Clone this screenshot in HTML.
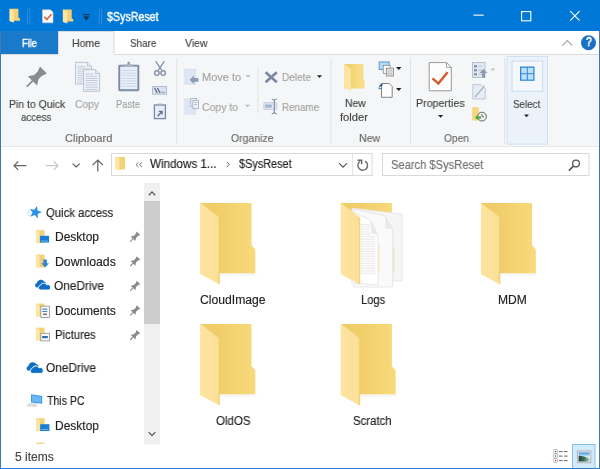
<!DOCTYPE html>
<html><head><meta charset="utf-8"><style>
html,body{margin:0;padding:0;}
body{width:600px;height:469px;overflow:hidden;position:relative;background:#fff;font-family:"Liberation Sans",sans-serif;}
svg{position:absolute;left:0;top:0;}
.t{position:absolute;white-space:nowrap;transform-origin:0 0;font-family:"Liberation Sans",sans-serif;-webkit-text-stroke:0.15px currentColor;will-change:transform;}
.q{position:absolute;color:#fff;font-weight:bold;font-family:"Liberation Sans",sans-serif;}
</style></head><body>
<svg width="600" height="469" viewBox="0 0 600 469">
<defs>
<linearGradient id="gback" x1="0" y1="0" x2="1" y2="0"><stop offset="0.3" stop-color="#f0cd68"/><stop offset="1" stop-color="#f8da7d"/></linearGradient>
<linearGradient id="gflap" x1="0" y1="0" x2="1" y2="0"><stop offset="0" stop-color="#fde4a0"/><stop offset="0.85" stop-color="#fbe099"/><stop offset="1" stop-color="#f9da8c"/></linearGradient>
<linearGradient id="gpic" x1="0" y1="0" x2="0" y2="1"><stop offset="0" stop-color="#3f8ee0"/><stop offset="0.25" stop-color="#8cc4f0"/><stop offset="0.5" stop-color="#e3f3f8"/><stop offset="1" stop-color="#b8d8d0"/></linearGradient>
<linearGradient id="ghill" x1="0" y1="0" x2="1" y2="0"><stop offset="0" stop-color="#1d4536"/><stop offset="0.5" stop-color="#3d6d5c"/><stop offset="1" stop-color="#b5d5cc"/></linearGradient>
<linearGradient id="gback2" x1="0" y1="0" x2="1" y2="0"><stop offset="0.3" stop-color="#f3d371"/><stop offset="1" stop-color="#f9df90"/></linearGradient>
</defs>
<rect x="0" y="0" width="600" height="31" fill="#0078d7"/>
<polygon points="9.6,8.8 18.4,8.8 18.4,17.4 20.0,18.5 20.0,20.7 9.6,20.7" fill="#f3d173"/><polygon points="9.6,8.8 14.0,10.5 14.0,22.6 9.6,21.2" fill="#fde6a4"/>
<rect x="27.5" y="9" width="2.5" height="15" rx="1" fill="none" stroke="#3d92e0" stroke-width="0.8"/>
<path d="M42.5 9.8 H50.5 L53 12.3 V22.8 H42.5 Z" fill="#fafafa" stroke="#c9c9c9" stroke-width="0.6"/>
<polyline points="44.3,16.8 46.8,19.5 51.5,14.3" fill="none" stroke="#d9582b" stroke-width="1.5"/>
<polygon points="62.9,9.6 71.7,9.6 71.7,18.2 73.3,19.3 73.3,21.5 62.9,21.5" fill="#f3d173"/><polygon points="62.9,9.6 67.3,11.3 67.3,23.4 62.9,22.0" fill="#fde6a4"/>
<rect x="83.3" y="14" width="6" height="1.2" fill="#1b2b48"/>
<polygon points="83.3,16.6 89.3,16.6 86.3,20.4" fill="#1b2b48"/>
<rect x="99.2" y="9" width="2.5" height="15" rx="1" fill="none" stroke="#3d92e0" stroke-width="0.8"/>
<rect x="473.5" y="14.6" width="10.3" height="1.1" fill="#fff"/>
<rect x="521.6" y="11.6" width="9.2" height="9.2" fill="none" stroke="#fff" stroke-width="1.1"/>
<path d="M570.2 11.2 L579.6 20.6 M579.6 11.2 L570.2 20.6" stroke="#fff" stroke-width="1.1"/>
<rect x="0" y="31" width="600" height="23" fill="#ffffff"/>
<rect x="0" y="31" width="58" height="23" fill="#1979ca"/>
<rect x="58.5" y="31.5" width="55.5" height="23" fill="#f5f6f7" stroke="#dadbdc" stroke-width="1"/>
<polyline points="562.3,45.6 567.3,40.6 572.3,45.6" fill="none" stroke="#a2a2a2" stroke-width="1.1"/>
<circle cx="588.5" cy="42.7" r="7.5" fill="#1a6fc6"/>
<rect x="0" y="54" width="600" height="93" fill="#f5f6f7"/>
<rect x="0" y="54" width="58" height="1" fill="#dadbdc"/>
<rect x="114" y="54" width="486" height="1" fill="#dadbdc"/>
<rect x="0" y="146" width="600" height="1" fill="#e6e7e8"/>
<rect x="176.2" y="58" width="1" height="86" fill="#e2e3e4"/>
<rect x="330.5" y="58" width="1" height="86" fill="#e2e3e4"/>
<rect x="409.9" y="58" width="1" height="86" fill="#e2e3e4"/>
<rect x="504.2" y="58" width="1" height="86" fill="#e2e3e4"/>
<g transform="translate(26.8,86.6) rotate(45)" fill="#8a8b8c"><rect x="-0.9" y="-8.5" width="1.8" height="8.5"/><polygon points="-6.6,-8 6.6,-8 3,-13.5 3,-18.5 4.9,-23.5 -4.9,-23.5 -3,-18.5 -3,-13.5"/></g>
<path d="M75.5 62.3 H87.5 L91.5 66.3 V84.1 H75.5 Z" fill="#eef2f8" stroke="#b3bfd2" stroke-width="0.9"/><path d="M87.5 62.3 V66.3 H91.5" fill="#dfe6f0" stroke="#b3bfd2" stroke-width="0.7"/><rect x="77.5" y="66.3" width="8" height="0.8" fill="#b9c4d6"/><rect x="77.5" y="68.5" width="12" height="0.8" fill="#b9c4d6"/><rect x="77.5" y="70.7" width="12" height="0.8" fill="#b9c4d6"/><rect x="77.5" y="72.9" width="12" height="0.8" fill="#b9c4d6"/><rect x="77.5" y="75.1" width="12" height="0.8" fill="#b9c4d6"/><rect x="77.5" y="77.3" width="12" height="0.8" fill="#b9c4d6"/><rect x="77.5" y="79.5" width="12" height="0.8" fill="#b9c4d6"/><rect x="77.5" y="81.7" width="12" height="0.8" fill="#b9c4d6"/>
<path d="M83.6 69.6 H95.6 L99.6 73.6 V91.39999999999999 H83.6 Z" fill="#eef2f8" stroke="#b3bfd2" stroke-width="0.9"/><path d="M95.6 69.6 V73.6 H99.6" fill="#dfe6f0" stroke="#b3bfd2" stroke-width="0.7"/><rect x="85.6" y="73.6" width="8" height="0.8" fill="#b9c4d6"/><rect x="85.6" y="75.8" width="12" height="0.8" fill="#b9c4d6"/><rect x="85.6" y="78.0" width="12" height="0.8" fill="#b9c4d6"/><rect x="85.6" y="80.2" width="12" height="0.8" fill="#b9c4d6"/><rect x="85.6" y="82.4" width="12" height="0.8" fill="#b9c4d6"/><rect x="85.6" y="84.6" width="12" height="0.8" fill="#b9c4d6"/><rect x="85.6" y="86.8" width="12" height="0.8" fill="#b9c4d6"/><rect x="85.6" y="89.0" width="12" height="0.8" fill="#b9c4d6"/>
<rect x="118.3" y="64.8" width="21" height="26.4" rx="1.4" fill="#7f8ca8"/>
<rect x="120.2" y="66.6" width="17.2" height="22.6" fill="#e9eff8"/>
<rect x="121.2" y="70.2" width="15.2" height="0.7" fill="#c3cee0"/>
<rect x="121.2" y="72.8" width="15.2" height="0.7" fill="#c3cee0"/>
<rect x="121.2" y="75.4" width="15.2" height="0.7" fill="#c3cee0"/>
<rect x="121.2" y="78" width="15.2" height="0.7" fill="#c3cee0"/>
<rect x="121.2" y="80.6" width="15.2" height="0.7" fill="#c3cee0"/>
<rect x="121.2" y="83.2" width="15.2" height="0.7" fill="#c3cee0"/>
<rect x="121.2" y="85.8" width="15.2" height="0.7" fill="#c3cee0"/>
<polygon points="123.6,66.8 125,64.2 132.6,64.2 134,66.8" fill="#aab4c6"/>
<circle cx="128.8" cy="63" r="1.5" fill="#9aa5b8"/>
<g fill="none" stroke="#8490a8" stroke-width="1.35"><path d="M155.6 61.4 L161.8 70.2 M164.4 61.4 L158.2 70.2"/><circle cx="156.9" cy="73.1" r="2.3"/><circle cx="163.1" cy="73.1" r="2.3"/></g>
<rect x="152.6" y="86.6" width="14" height="7.6" fill="#dae3f1" stroke="#a3b0c7" stroke-width="0.8"/>
<path d="M154.6 88 L157.2 93 M157.4 88 L160 93" fill="none" stroke="#4f5e7c" stroke-width="1.1"/>
<rect x="160.5" y="91.8" width="4.6" height="0.9" fill="#8f9bb3"/>
<rect x="154.4" y="105" width="11" height="13.6" fill="#e9eef6" stroke="#7d89a2" stroke-width="1.3"/>
<rect x="157.6" y="103.6" width="4.6" height="2.4" fill="#a5b0c2"/>
<path d="M157.6 116.2 L161.6 111.8 M158.8 111.4 H162 V114.6" fill="none" stroke="#5f7296" stroke-width="1.4"/>
<rect x="184.8" y="69" width="11.2" height="15.2" fill="#dde6f2" stroke="#d3dcea" stroke-width="0.5"/>
<polygon points="189.6,79.8 194,75.6 194,77.9 198.4,77.9 198.4,81.7 194,81.7 194,84" fill="#8e9cb4"/>
<rect x="184.8" y="98.8" width="11.2" height="15.4" fill="#dde6f2" stroke="#d3dcea" stroke-width="0.5"/>
<rect x="190.8" y="98.4" width="5.8" height="7.8" fill="#eef2f8" stroke="#a3afc4" stroke-width="0.8"/>
<rect x="192.8" y="100.4" width="5.8" height="8" fill="#eef2f8" stroke="#a3afc4" stroke-width="0.8"/>
<rect x="194.2" y="102.3" width="3" height="0.7" fill="#a3afc4"/><rect x="194.2" y="104.2" width="3" height="0.7" fill="#a3afc4"/>
<polygon points="245.5,75 250.5,75 248,77.6" fill="#bdbdbd"/>
<polygon points="245,104.8 250,104.8 247.5,107.4" fill="#bdbdbd"/>
<rect x="257.5" y="67.5" width="1" height="45" fill="#e2e3e4"/>
<path d="M265.6 72.2 L276.8 82.2 M276.8 72.2 L265.6 82.2" stroke="#7a88a3" stroke-width="2.7"/>
<polygon points="317,75.3 322,75.3 319.5,78" fill="#222"/>
<rect x="263.8" y="102.6" width="13" height="7" rx="1" fill="#dde5f1" stroke="#b7c3d6" stroke-width="0.7"/>
<rect x="265.2" y="104.6" width="6.5" height="3" fill="#a6b4cb"/>
<path d="M271.8 99 Q274.3 99.6 274.3 101 Q274.3 99.6 276.8 99 M274.3 100.5 V112.5 M271.8 114 Q274.3 113.4 274.3 112 Q274.3 113.4 276.8 114" stroke="#7d89a2" stroke-width="1.1" fill="none"/>
<polygon points="344,64 363.4,64 363.4,78.5 364.6,80 364.6,88.6 344,88.6" fill="url(#gback2)"/>
<polygon points="344,64 351,69.4 351,91.3 344,86.8" fill="#fde4a2"/>
<rect x="379.2" y="61.9" width="10" height="7.6" fill="#b7d9f5" stroke="#4f95d6" stroke-width="0.9"/>
<rect x="383.2" y="65.3" width="7" height="8.2" fill="#fafafa" stroke="#8a8a8a" stroke-width="0.8"/>
<rect x="386.4" y="68.2" width="7.2" height="7.8" fill="#e6e6e6" stroke="#8a8a8a" stroke-width="0.8"/>
<path d="M386.4 70.8 H393.6 M386.4 73.4 H393.6 M389 68.2 V76 M391.2 68.2 V76" stroke="#b5b5b5" stroke-width="0.5"/>
<polygon points="396,67 401.5,67 398.75,70" fill="#222"/>
<path d="M381.5 83.5 H389.2 L392.2 86.5 V97.3 H381.5 Z" fill="#fff" stroke="#777" stroke-width="0.9"/>
<path d="M379 87.6 L380.6 84.6 H383 M378.6 88.6 H381.5" stroke="#3b82cc" stroke-width="1"/>
<polygon points="396,88 401.5,88 398.75,91" fill="#222"/>
<path d="M429.2 62.6 H446.5 L451.3 67.4 V90.8 H429.2 Z" fill="#fdfdfd" stroke="#8e8e8e" stroke-width="0.9"/>
<path d="M446.5 62.6 V67.4 H451.3" fill="none" stroke="#8e8e8e" stroke-width="0.8"/>
<polyline points="432.5,78.3 438.4,83.6 447.6,72.2" fill="none" stroke="#d55a2a" stroke-width="2.4"/>
<polygon points="438,115 443.2,115 440.6,117.8" fill="#222"/>
<rect x="472.5" y="62.5" width="12.5" height="15" fill="#e3e9f2" stroke="#aab6ca" stroke-width="0.8"/>
<rect x="474" y="65" width="3" height="2.5" fill="#8d9ab0"/><rect x="478" y="65.8" width="4" height="0.8" fill="#b0bbcc"/>
<rect x="474" y="69" width="3" height="2.5" fill="#8d9ab0"/><rect x="478" y="69.8" width="4" height="0.8" fill="#b0bbcc"/>
<rect x="474" y="73" width="3" height="2.5" fill="#8d9ab0"/><rect x="478" y="73.8" width="4" height="0.8" fill="#b0bbcc"/>
<path d="M482 77.5 V73 H479.5 L483.5 69 L487.5 73 H485 V77.5 Z" fill="#8d9ab0"/>
<polygon points="490.6,68.5 495.2,68.5 492.9,71" fill="#bdbdbd"/>
<path d="M472.8 84.6 H481 L485.2 88.8 V99 H472.8 Z" fill="#e8edf5" stroke="#b3bfd1" stroke-width="0.8"/>
<path d="M475 97 L484.5 86" stroke="#a9b5c8" stroke-width="1.2"/>
<polygon points="472.5,107.5 478.5,107.5 478.5,115 472.5,120" fill="#efc55c"/>
<rect x="472.5" y="107.5" width="6" height="13" fill="#f5d57e"/>
<circle cx="482" cy="116.6" r="4.4" fill="#f0f0f0" stroke="#666" stroke-width="1"/>
<path d="M482 114 V116.8 H484" stroke="#555" stroke-width="0.8" fill="none"/>
<path d="M475 117.5 L478 115 V116.6 H481 V118.5 H478 V120 Z" fill="#3aa83a"/>
<rect x="507" y="56.5" width="40.5" height="87.6" fill="#ecf2f9" stroke="#d2e1f1" stroke-width="1"/>
<rect x="512" y="61" width="30.6" height="30.3" fill="#f4f7fb" stroke="#c9dbec" stroke-width="1"/>
<rect x="520" y="66.5" width="14.5" height="14.3" fill="#2d89d9"/>
<rect x="521.3" y="67.8" width="5.5" height="5.4" fill="#bfe0fa"/><rect x="527.8" y="67.8" width="5.5" height="5.4" fill="#bfe0fa"/>
<rect x="521.3" y="74.2" width="5.5" height="5.4" fill="#bfe0fa"/><rect x="527.8" y="74.2" width="5.5" height="5.4" fill="#bfe0fa"/>
<polygon points="524,114.6 529,114.6 526.5,117.2" fill="#222"/>
<path d="M14 165.7 H26.4 M18.2 161.5 L14 165.7 L18.2 169.9" fill="none" stroke="#666" stroke-width="1.2"/>
<path d="M45.6 165.7 H58 M53.8 161.5 L58 165.7 L53.8 169.9" fill="none" stroke="#c8c8c8" stroke-width="1.2"/>
<polyline points="72.6,163.6 76.2,167 79.8,163.6" fill="none" stroke="#5a5a5a" stroke-width="1.2"/>
<path d="M97.8 171.6 V160 M92.6 165.2 L97.8 160 L103 165.2" fill="none" stroke="#606060" stroke-width="1.2"/>
<rect x="111.5" y="153.5" width="260.5" height="22" fill="#fff" stroke="#d9d9d9" stroke-width="1"/>
<rect x="352" y="154" width="1" height="21" fill="#e3e3e3"/>
<rect x="115.5" y="157" width="9.5" height="12.5" fill="#f4d375"/>
<polygon points="115.5,157 119.5,158.6 119.5,170.5 115.5,169" fill="#fde6a6"/>
<path d="M138.5 162.3 L136 164.7 L138.5 167.1 M142 162.3 L139.5 164.7 L142 167.1" fill="none" stroke="#666" stroke-width="0.9"/>
<polyline points="226.8,161.8 229.4,164.4 226.8,167" fill="none" stroke="#666" stroke-width="1"/>
<polyline points="339,163.2 343,167.2 347,163.2" fill="none" stroke="#555" stroke-width="1.2"/>
<path d="M365.1 161.2 A4.8 4.8 0 1 1 359.95 161.47" fill="none" stroke="#666" stroke-width="1.4"/>
<polyline points="357.6,160.3 361.6,160.3 361.6,164.2" fill="none" stroke="#666" stroke-width="1.5"/>
<rect x="382.5" y="153.5" width="206.5" height="22" fill="#fff" stroke="#d9d9d9" stroke-width="1"/>
<circle cx="576" cy="163.6" r="3.4" fill="none" stroke="#555" stroke-width="1.3"/>
<path d="M573.5 166.2 L568.8 170.6" stroke="#555" stroke-width="1.6"/>
<rect x="144" y="183" width="16" height="261.5" fill="#f0f0f0"/>
<rect x="144" y="201" width="16" height="123" fill="#cdcdcd"/>
<polyline points="148.8,195.3 152,192 155.2,195.3" fill="none" stroke="#606060" stroke-width="1.3"/>
<polyline points="148.8,432.3 152,435.6 155.2,432.3" fill="none" stroke="#606060" stroke-width="1.3"/>
<polygon points="37.00,206.00 37.54,210.60 41.98,211.94 37.77,213.88 37.87,218.52 34.72,215.12 30.34,216.64 32.61,212.60 29.80,208.90 34.35,209.80" fill="#2b92e6"/>
<path d="M26.8 213.5 L30.5 212 M27.5 216 L31 214.5 M28.5 210.5 L31 209.8" stroke="#b5daf5" stroke-width="0.9"/>
<rect x="36.1" y="230.2" width="8.4" height="12.8" fill="#f3d277"/><polygon points="36.1,230.2 39.6,231.7 39.6,243.2 36.1,242.0" fill="#fde6a6"/>
<rect x="39.9" y="235.8" width="9.2" height="6.7" fill="#1a7fd4"/><rect x="41" y="240.6" width="7" height="0.8" fill="#7cc0f2"/>
<rect x="36.2" y="254.6" width="8.4" height="12.8" fill="#f3d277"/><polygon points="36.2,254.6 39.7,256.1 39.7,267.6 36.2,266.4" fill="#fde6a6"/>
<path d="M43.4 259.6 H46.9 V263.2 H49 L45.15 267.6 L41.3 263.2 H43.4 Z" fill="#2f86d6"/>
<g transform="translate(34.6,279) scale(1.0)"><path d="M2.4 8.6 A2.3 2.3 0 0 1 2.2 4.1 A4.1 4.1 0 0 1 9.6 2.4 A3.2 3.2 0 0 1 11.8 4.2 L8 8.6 Z" fill="#0f6fc6"/><path d="M5.6 11 A2.3 2.3 0 0 1 5.6 6.5 A3.7 3.7 0 0 1 12.1 5.7 A2.7 2.7 0 0 1 14.2 11 Z" fill="#0f6fc6" stroke="#fff" stroke-width="0.9"/></g>
<rect x="36.1" y="303.6" width="8.4" height="12.8" fill="#f3d277"/><polygon points="36.1,303.6 39.6,305.1 39.6,316.6 36.1,315.40000000000003" fill="#fde6a6"/>
<rect x="40.8" y="306.2" width="8.6" height="11.2" fill="#fafafa" stroke="#8f8f8f" stroke-width="0.8"/>
<rect x="42.3" y="308.5" width="5" height="1.2" fill="#3a8ad6"/><rect x="42.3" y="311" width="5" height="1" fill="#3a8ad6"/><rect x="43" y="313.5" width="4" height="1.5" fill="#777"/>
<rect x="36.1" y="327.7" width="8.4" height="12.8" fill="#f3d277"/><polygon points="36.1,327.7 39.6,329.2 39.6,340.7 36.1,339.5" fill="#fde6a6"/>
<rect x="40.8" y="333.3" width="8.6" height="7.6" fill="#fafafa" stroke="#8f8f8f" stroke-width="0.8"/>
<rect x="42.2" y="336" width="5.6" height="2.2" fill="#2a6fb0"/>
<g transform="translate(130.2,241.6) rotate(45) scale(0.5)" fill="#8a8a8a"><rect x="-1.1" y="-8.5" width="2.2" height="8.5"/><polygon points="-6.6,-8 6.6,-8 3,-13.5 3,-18.5 4.9,-23.5 -4.9,-23.5 -3,-18.5 -3,-13.5"/></g>
<g transform="translate(130.2,266.2) rotate(45) scale(0.5)" fill="#8a8a8a"><rect x="-1.1" y="-8.5" width="2.2" height="8.5"/><polygon points="-6.6,-8 6.6,-8 3,-13.5 3,-18.5 4.9,-23.5 -4.9,-23.5 -3,-18.5 -3,-13.5"/></g>
<g transform="translate(130.2,290.8) rotate(45) scale(0.5)" fill="#8a8a8a"><rect x="-1.1" y="-8.5" width="2.2" height="8.5"/><polygon points="-6.6,-8 6.6,-8 3,-13.5 3,-18.5 4.9,-23.5 -4.9,-23.5 -3,-18.5 -3,-13.5"/></g>
<g transform="translate(130.2,315.4) rotate(45) scale(0.5)" fill="#8a8a8a"><rect x="-1.1" y="-8.5" width="2.2" height="8.5"/><polygon points="-6.6,-8 6.6,-8 3,-13.5 3,-18.5 4.9,-23.5 -4.9,-23.5 -3,-18.5 -3,-13.5"/></g>
<g transform="translate(130.2,340) rotate(45) scale(0.5)" fill="#8a8a8a"><rect x="-1.1" y="-8.5" width="2.2" height="8.5"/><polygon points="-6.6,-8 6.6,-8 3,-13.5 3,-18.5 4.9,-23.5 -4.9,-23.5 -3,-18.5 -3,-13.5"/></g>
<g transform="translate(26,361.5) scale(1.08)"><path d="M2.4 8.6 A2.3 2.3 0 0 1 2.2 4.1 A4.1 4.1 0 0 1 9.6 2.4 A3.2 3.2 0 0 1 11.8 4.2 L8 8.6 Z" fill="#0f6fc6"/><path d="M5.6 11 A2.3 2.3 0 0 1 5.6 6.5 A3.7 3.7 0 0 1 12.1 5.7 A2.7 2.7 0 0 1 14.2 11 Z" fill="#0f6fc6" stroke="#fff" stroke-width="0.9"/></g>
<polygon points="31,394.3 42.2,396 42.2,403.7 31,402.5" fill="#3d9ae8"/>
<polygon points="32,395.4 41.2,396.9 41.2,402.6 32,401.4" fill="#69b8f3"/>
<polygon points="29,403 38,403.6 36,407.1 26,406.3" fill="#dcdcdc"/>
<rect x="36.2" y="418.2" width="8.4" height="12.8" fill="#f3d277"/><polygon points="36.2,418.2 39.7,419.7 39.7,431.2 36.2,430.0" fill="#fde6a6"/>
<rect x="40.2" y="424.2" width="9.2" height="6.8" fill="#1a7fd4"/><rect x="41.3" y="429" width="7" height="0.8" fill="#7cc0f2"/>
<rect x="36.2" y="442.6" width="8.4" height="1.2" fill="#f5d07a"/>
<g transform="translate(200.5,203)"><polygon points="0,0 51,0 51,42 54.8,46.5 54.8,70.6 0,70.6" fill="url(#gback)"/><rect x="19" y="70.6" width="37" height="2" fill="#f6f6f6"/><polygon points="0,0 19.1,14.6 19.1,81.4 0,71.2" fill="url(#gflap)"/><polygon points="18.3,14 19.4,14.6 19.4,81.4 18.3,80.8" fill="#e9c45c" opacity="0.5"/></g>
<g transform="translate(340.9,203)"><polygon points="0,0 51,0 51,42 54.8,46.5 54.8,70.6 0,70.6" fill="url(#gback)"/><rect x="19" y="70.6" width="37" height="2" fill="#f6f6f6"/><polygon points="11,5 61.4,11 61.4,78 11,78" fill="#f5f5f5" stroke="#e0e0e0" stroke-width="0.6"/><polygon points="13,6 44,12.8 51.8,26.2 51.8,84 13,84" fill="#fafafa" stroke="#dadada" stroke-width="0.6"/><polygon points="44,12.8 51.8,26.2 44.6,25.2" fill="#ebebe6"/><polygon points="11,9 29.7,17 37,32 37,82 11,80" fill="#ffffff" stroke="#d8d8d8" stroke-width="0.6"/><polygon points="29.7,17 37,32 30.4,30.4" fill="#e9e9e3"/><rect x="19.5" y="21.0" width="10" height="0.8" fill="#e9e9e9"/><rect x="19.5" y="22.7" width="10" height="0.8" fill="#e9e9e9"/><rect x="19.5" y="24.4" width="10" height="0.8" fill="#e9e9e9"/><rect x="19.5" y="26.1" width="10" height="0.8" fill="#e9e9e9"/><rect x="19.5" y="27.8" width="10" height="0.8" fill="#e9e9e9"/><rect x="19.5" y="29.5" width="10" height="0.8" fill="#e9e9e9"/><rect x="19.5" y="31.2" width="10" height="0.8" fill="#e9e9e9"/><rect x="19.5" y="32.9" width="15" height="0.8" fill="#e9e9e9"/><rect x="19.5" y="34.6" width="15" height="0.8" fill="#e9e9e9"/><rect x="19.5" y="36.3" width="15" height="0.8" fill="#e9e9e9"/><rect x="19.5" y="38.0" width="15" height="0.8" fill="#e9e9e9"/><rect x="19.5" y="39.7" width="15" height="0.8" fill="#e9e9e9"/><rect x="19.5" y="41.4" width="15" height="0.8" fill="#e9e9e9"/><rect x="19.5" y="43.1" width="15" height="0.8" fill="#e9e9e9"/><rect x="19.5" y="44.8" width="15" height="0.8" fill="#e9e9e9"/><rect x="19.5" y="46.5" width="15" height="0.8" fill="#e9e9e9"/><rect x="19.5" y="48.2" width="15" height="0.8" fill="#e9e9e9"/><rect x="19.5" y="49.9" width="15" height="0.8" fill="#e9e9e9"/><rect x="19.5" y="51.6" width="15" height="0.8" fill="#e9e9e9"/><rect x="19.5" y="53.3" width="15" height="0.8" fill="#e9e9e9"/><rect x="19.5" y="55.0" width="15" height="0.8" fill="#e9e9e9"/><rect x="19.5" y="56.7" width="15" height="0.8" fill="#e9e9e9"/><rect x="19.5" y="58.4" width="15" height="0.8" fill="#e9e9e9"/><rect x="19.5" y="60.1" width="15" height="0.8" fill="#e9e9e9"/><rect x="19.5" y="61.8" width="15" height="0.8" fill="#e9e9e9"/><rect x="19.5" y="63.5" width="15" height="0.8" fill="#e9e9e9"/><rect x="19.5" y="65.2" width="15" height="0.8" fill="#e9e9e9"/><rect x="19.5" y="66.9" width="15" height="0.8" fill="#e9e9e9"/><rect x="19.5" y="68.6" width="15" height="0.8" fill="#e9e9e9"/><rect x="19.5" y="70.3" width="15" height="0.8" fill="#e9e9e9"/><rect x="37.6" y="42" width="0.9" height="27" fill="#f4e2a8"/><rect x="52.6" y="45" width="0.9" height="24" fill="#f4e2a8"/><polygon points="0,0 19.1,14.6 19.1,81.4 0,71.2" fill="url(#gflap)"/><polygon points="18.3,14 19.4,14.6 19.4,81.4 18.3,80.8" fill="#e9c45c" opacity="0.5"/></g>
<g transform="translate(481,203)"><polygon points="0,0 51,0 51,42 54.8,46.5 54.8,70.6 0,70.6" fill="url(#gback)"/><rect x="19" y="70.6" width="37" height="2" fill="#f6f6f6"/><polygon points="0,0 19.1,14.6 19.1,81.4 0,71.2" fill="url(#gflap)"/><polygon points="18.3,14 19.4,14.6 19.4,81.4 18.3,80.8" fill="#e9c45c" opacity="0.5"/></g>
<g transform="translate(200.5,324)"><polygon points="0,0 51,0 51,42 54.8,46.5 54.8,70.6 0,70.6" fill="url(#gback)"/><rect x="19" y="70.6" width="37" height="2" fill="#f6f6f6"/><polygon points="0,0 19.1,14.6 19.1,81.4 0,71.2" fill="url(#gflap)"/><polygon points="18.3,14 19.4,14.6 19.4,81.4 18.3,80.8" fill="#e9c45c" opacity="0.5"/></g>
<g transform="translate(340.9,324)"><polygon points="0,0 51,0 51,42 54.8,46.5 54.8,70.6 0,70.6" fill="url(#gback)"/><rect x="19" y="70.6" width="37" height="2" fill="#f6f6f6"/><polygon points="0,0 19.1,14.6 19.1,81.4 0,71.2" fill="url(#gflap)"/><polygon points="18.3,14 19.4,14.6 19.4,81.4 18.3,80.8" fill="#e9c45c" opacity="0.5"/></g>
<rect x="553.6" y="449.5" width="4" height="4" rx="1" fill="#fff" stroke="#a0a0a0" stroke-width="0.7"/>
<rect x="555" y="450.9" width="1.3" height="1.3" fill="#555"/>
<rect x="559" y="451.1" width="3.6" height="1" fill="#666"/><rect x="564" y="451.1" width="3.6" height="1" fill="#666"/>
<rect x="553.6" y="454" width="4" height="4" rx="1" fill="#fff" stroke="#a0a0a0" stroke-width="0.7"/>
<rect x="555" y="455.4" width="1.3" height="1.3" fill="#3a7fd0"/>
<rect x="559" y="455.6" width="3.6" height="1" fill="#666"/><rect x="564" y="455.6" width="3.6" height="1" fill="#666"/>
<rect x="553.6" y="458.5" width="4" height="4" rx="1" fill="#fff" stroke="#a0a0a0" stroke-width="0.7"/>
<rect x="555" y="459.9" width="1.3" height="1.3" fill="#d33"/>
<rect x="559" y="460.1" width="3.6" height="1" fill="#666"/><rect x="564" y="460.1" width="3.6" height="1" fill="#666"/>
<rect x="572.5" y="444.5" width="22.5" height="24" fill="#d3eafc" stroke="#86c0ec" stroke-width="1"/>
<rect x="577.3" y="451" width="13.6" height="11.8" fill="#f4f4f4" stroke="#9a9a9a" stroke-width="0.7"/>
<rect x="578.6" y="452.4" width="11" height="9" fill="url(#gpic)"/>
<path d="M578.6 456 C581 455.5 584 456.5 589.6 458.5 V461.4 H578.6 Z" fill="url(#ghill)"/>
<rect x="0" y="31" width="1" height="438" fill="#3f7bb0"/>
<rect x="599" y="31" width="1" height="438" fill="#3f7bb0"/>
<rect x="0" y="468" width="600" height="1" fill="#2a7fd0"/>
</svg>
<div class="t" style="left:106.80px;top:10.30px;font-size:13px;line-height:13px;color:#fff;transform:scaleX(0.8191);-webkit-text-stroke:0.45px currentColor;">$SysReset</div>
<div class="t" style="left:21.60px;top:38.09px;font-size:11px;line-height:11px;color:#fff;transform:scaleX(0.8458);-webkit-text-stroke:0.45px currentColor;">File</div>
<div class="t" style="left:72.00px;top:38.09px;font-size:11px;line-height:11px;color:#444;transform:scaleX(0.9542);">Home</div>
<div class="t" style="left:129.60px;top:38.09px;font-size:11px;line-height:11px;color:#444;transform:scaleX(0.8992);">Share</div>
<div class="t" style="left:185.00px;top:38.09px;font-size:11px;line-height:11px;color:#444;transform:scaleX(0.9469);">View</div>
<div class="t" style="left:8.80px;top:98.59px;font-size:11px;line-height:11px;color:#444;transform:scaleX(0.9492);">Pin to Quick</div>
<div class="t" style="left:20.70px;top:112.19px;font-size:11px;line-height:11px;color:#444;transform:scaleX(0.8847);">access</div>
<div class="t" style="left:75.00px;top:98.79px;font-size:11px;line-height:11px;color:#a3a3a3;transform:scaleX(0.9343);">Copy</div>
<div class="t" style="left:115.90px;top:98.79px;font-size:11px;line-height:11px;color:#a3a3a3;transform:scaleX(0.8564);">Paste</div>
<div class="t" style="left:201.90px;top:71.99px;font-size:11px;line-height:11px;color:#a3a3a3;transform:scaleX(0.9990);">Move to</div>
<div class="t" style="left:201.90px;top:101.99px;font-size:11px;line-height:11px;color:#a3a3a3;transform:scaleX(0.9520);">Copy to</div>
<div class="t" style="left:282.00px;top:71.99px;font-size:11px;line-height:11px;color:#a3a3a3;transform:scaleX(0.9120);">Delete</div>
<div class="t" style="left:282.00px;top:101.99px;font-size:11px;line-height:11px;color:#a3a3a3;transform:scaleX(0.8923);">Rename</div>
<div class="t" style="left:344.60px;top:98.19px;font-size:11px;line-height:11px;color:#444;transform:scaleX(0.9402);">New</div>
<div class="t" style="left:340.40px;top:111.69px;font-size:11px;line-height:11px;color:#444;transform:scaleX(1.0170);">folder</div>
<div class="t" style="left:415.80px;top:98.19px;font-size:11px;line-height:11px;color:#444;transform:scaleX(0.9713);">Properties</div>
<div class="t" style="left:512.80px;top:98.89px;font-size:11px;line-height:11px;color:#444;transform:scaleX(0.8895);">Select</div>
<div class="t" style="left:64.70px;top:132.69px;font-size:11px;line-height:11px;color:#6a6a6a;transform:scaleX(1.0044);">Clipboard</div>
<div class="t" style="left:231.20px;top:132.69px;font-size:11px;line-height:11px;color:#6a6a6a;transform:scaleX(0.9520);">Organize</div>
<div class="t" style="left:358.80px;top:132.69px;font-size:11px;line-height:11px;color:#6a6a6a;transform:scaleX(0.9630);">New</div>
<div class="t" style="left:443.80px;top:132.69px;font-size:11px;line-height:11px;color:#6a6a6a;transform:scaleX(0.9286);">Open</div>
<div class="t" style="left:150.00px;top:158.44px;font-size:12px;line-height:12px;color:#222;transform:scaleX(0.9694);">Windows 1...</div>
<div class="t" style="left:239.00px;top:158.44px;font-size:12px;line-height:12px;color:#222;transform:scaleX(0.9064);">$SysReset</div>
<div class="t" style="left:390.60px;top:159.44px;font-size:12px;line-height:12px;color:#707070;transform:scaleX(0.9297);">Search $SysReset</div>
<div class="t" style="left:46.00px;top:206.84px;font-size:12px;line-height:12px;color:#222;transform:scaleX(0.9431);">Quick access</div>
<div class="t" style="left:54.70px;top:231.04px;font-size:12px;line-height:12px;color:#222;transform:scaleX(0.9993);">Desktop</div>
<div class="t" style="left:54.60px;top:255.64px;font-size:12px;line-height:12px;color:#222;transform:scaleX(1.0240);">Downloads</div>
<div class="t" style="left:54.30px;top:280.24px;font-size:12px;line-height:12px;color:#222;transform:scaleX(0.9864);">OneDrive</div>
<div class="t" style="left:54.60px;top:304.84px;font-size:12px;line-height:12px;color:#222;transform:scaleX(1.0016);">Documents</div>
<div class="t" style="left:54.60px;top:329.44px;font-size:12px;line-height:12px;color:#222;transform:scaleX(0.9387);">Pictures</div>
<div class="t" style="left:46.00px;top:362.34px;font-size:12px;line-height:12px;color:#222;transform:scaleX(0.9864);">OneDrive</div>
<div class="t" style="left:46.70px;top:395.04px;font-size:12px;line-height:12px;color:#222;transform:scaleX(0.8785);">This PC</div>
<div class="t" style="left:54.60px;top:419.54px;font-size:12px;line-height:12px;color:#222;transform:scaleX(0.9970);">Desktop</div>
<div class="t" style="left:15.20px;top:451.24px;font-size:12px;line-height:12px;color:#444;transform:scaleX(1.0029);">5 items</div>
<div class="t" style="left:200.00px;top:293.54px;font-size:12px;line-height:12px;color:#222;transform:scaleX(1.0136);">CloudImage</div>
<div class="t" style="left:360.80px;top:293.54px;font-size:12px;line-height:12px;color:#222;transform:scaleX(0.9297);">Logs</div>
<div class="t" style="left:498.30px;top:293.54px;font-size:12px;line-height:12px;color:#222;transform:scaleX(1.0045);">MDM</div>
<div class="t" style="left:215.50px;top:414.94px;font-size:12px;line-height:12px;color:#222;transform:scaleX(0.9579);">OldOS</div>
<div class="t" style="left:353.20px;top:414.94px;font-size:12px;line-height:12px;color:#222;transform:scaleX(0.9487);">Scratch</div>
<div class="q" style="left:585.8px;top:35.4px;font-size:13px;line-height:14px;font-weight:normal;-webkit-text-stroke:0.55px #fff;transform:scaleX(0.78);transform-origin:0 0;">?</div>
</body></html>
